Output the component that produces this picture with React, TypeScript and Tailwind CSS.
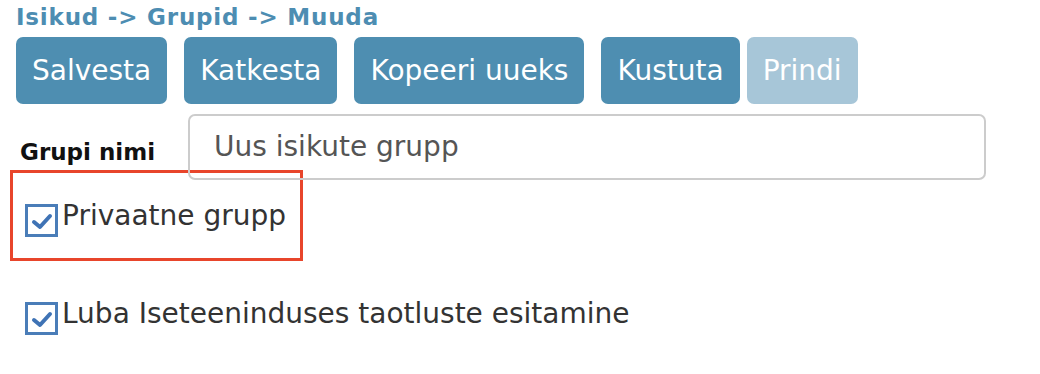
import React from 'react';

const font = { fontFamily: '"DejaVu Sans", Verdana, sans-serif' };

const Checkbox: React.FC = () => (
  <span className="inline-flex w-[33px] h-[33px] shrink-0 items-center justify-center border-[3px] border-[#4a7db8] bg-white">
    <svg width="22" height="22" viewBox="0 0 22 22">
      <path d="M3 12 L9 17 L19 6" fill="none" stroke="#3f73b5" strokeWidth="4" strokeLinecap="round" strokeLinejoin="round" />
    </svg>
  </span>
);

const App: React.FC = () => {
  const buttons = ['Salvesta', 'Katkesta', 'Kopeeri uueks', 'Kustuta'];
  return (
    <div className="w-[1040px] h-[374px] bg-white text-[#333]" style={font}>
      <div className="pl-4 pt-[2px] text-[23px] leading-[31px] tracking-[0.8px] font-bold text-[#4d8db2]">Isikud -&gt; Grupid -&gt; Muuda</div>

      <div className="flex pl-4 mt-[4px]">
        {buttons.map((b, i) => (
          <button
            key={b}
            className={`h-[67px] px-[16px] rounded-[7px] bg-[#4e8eb1] text-white text-[28px] ${i < 3 ? 'mr-[17px]' : 'mr-[7px]'}`}
          >
            {b}
          </button>
        ))}
        <button className="h-[67px] px-[16px] rounded-[7px] bg-[#a7c6d8] text-white text-[28px]">Prindi</button>
      </div>

      <div className="flex items-center mt-[10px] pl-5">
        <span className="w-[168px] text-[23px] font-bold text-[#111] pt-[10px]">Grupi nimi</span>
        <div className="w-[798px] h-[66px] border-2 border-[#cccccc] rounded-[7px] flex items-center px-6 text-[28px] text-[#555]">
          Uus isikute grupp
        </div>
      </div>

      <div className="ml-[10px] -mt-[10px] w-[293px] h-[91px] border-[3px] border-[#e8452b] flex items-center pl-[12px]">
        <div className="flex items-start gap-[4px] text-[28px] leading-[32px] mt-[8px]">
          <span className="mt-[4px]"><Checkbox /></span>
          <span>Privaatne grupp</span>
        </div>
      </div>

      <div className="flex items-start gap-[4px] pl-[25px] mt-[37px] text-[28px] leading-[32px]">
        <span className="mt-[4px]"><Checkbox /></span>
        <span>Luba Iseteeninduses taotluste esitamine</span>
      </div>
    </div>
  );
};

export default App;
